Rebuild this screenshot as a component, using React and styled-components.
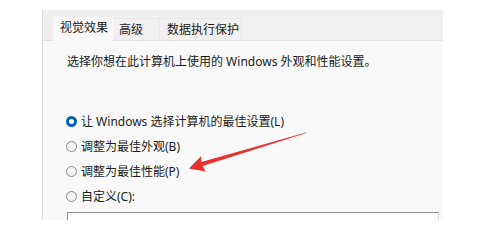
import React from "react";
import styled, { createGlobalStyle } from "styled-components";

const GlobalStyle = createGlobalStyle`
  html, body {
    margin: 0;
    padding: 0;
    background: #ffffff;
  }
  body {
    font-family: "Noto Sans", "Noto Sans CJK SC", sans-serif;
    font-size: 12px;
    color: #1b1b1b;
  }
`;

const Page = styled.div`
  position: relative;
  width: 482px;
  height: 220px;
  overflow: hidden;
  padding: 10px 0 0 42px;
  box-sizing: border-box;
`;

const Dialog = styled.div`
  width: 401px;
  height: 240px;
  background: #f9f9f9;
  border-left: 1px solid #dcdcdc;
  box-sizing: border-box;
`;

const TabStrip = styled.div`
  display: flex;
  align-items: flex-end;
  height: 31px;
  padding-left: 10px;
  background: #f0f0f0;
  border-bottom: 1px solid #e3e3e3;
  box-sizing: border-box;
`;

const Tab = styled.div`
  display: flex;
  align-items: center;
  box-sizing: border-box;
  width: ${(p) => p.$width}px;
  height: ${(p) => (p.$active ? 24 : 22)}px;
  padding-left: ${(p) => p.$pad}px;
  margin-bottom: ${(p) => (p.$active ? -1 : 0)}px;
  background: ${(p) => (p.$active ? "#f9f9f9" : "#f0f0f0")};
  border: 1px solid ${(p) => (p.$active ? "#f9f9f9" : "#e6e6e6")};
  border-bottom: none;
  border-left: ${(p) => (p.$active ? "1px solid #f9f9f9" : "none")};
  font-size: 12px;
  line-height: 16px;
  white-space: nowrap;
  padding-bottom: ${(p) => (p.$active ? 3 : 0)}px;
`;

const Content = styled.div`
  padding: 13px 4px 0 24px;
`;

const Description = styled.p`
  margin: 0;
  font-size: 12px;
  line-height: 16px;
  white-space: nowrap;
`;

const RadioGroup = styled.div`
  display: flex;
  flex-direction: column;
  margin-top: 39px;
`;

const RadioRow = styled.label`
  display: flex;
  align-items: center;
  gap: 4px;
  height: 25px;
  font-size: 12px;
  line-height: 16px;
  white-space: nowrap;
`;

const RadioDot = styled.span`
  width: 11px;
  height: 11px;
  border-radius: 50%;
  box-sizing: border-box;
  flex-shrink: 0;
  margin-left: -1px;
  background: ${(p) => (p.$checked ? "#ffffff" : "#f5f5f5")};
  border: ${(p) => (p.$checked ? "3px solid #0063b8" : "1px solid #8c8c8c")};
`;

const ListBox = styled.div`
  margin-top: 3px;
  height: 40px;
  background: #ffffff;
  border: 1px solid #8a8a8a;
  border-right-color: #d8d8d8;
`;

const ArrowLayer = styled.svg`
  position: absolute;
  left: 0;
  top: 0;
  width: 482px;
  height: 220px;
  pointer-events: none;
`;

const tabs = [
  { label: "视觉效果", width: 60, pad: 6, active: true },
  { label: "高级", width: 47, pad: 6 },
  { label: "数据执行保护", width: 82, pad: 7 },
];

const options = [
  { label: "让 Windows 选择计算机的最佳设置(L)", checked: true },
  { label: "调整为最佳外观(B)" },
  { label: "调整为最佳性能(P)" },
  { label: "自定义(C):" },
];

export default function App() {
  return (
    <>
      <GlobalStyle />
      <Page>
        <Dialog>
          <TabStrip>
            {tabs.map((t) => (
              <Tab key={t.label} $active={t.active} $width={t.width} $pad={t.pad}>
                {t.label}
              </Tab>
            ))}
          </TabStrip>
          <Content>
            <Description>选择你想在此计算机上使用的 Windows 外观和性能设置。</Description>
            <RadioGroup>
              {options.map((o) => (
                <RadioRow key={o.label}>
                  <RadioDot $checked={o.checked} />
                  <span>{o.label}</span>
                </RadioRow>
              ))}
            </RadioGroup>
            <ListBox />
          </Content>
        </Dialog>
        <ArrowLayer viewBox="0 0 482 220">
          <polygon
            fill="#e8302c"
            points="189,168.5 201,156.3 201.4,162 306,132.4 306.3,133 202.6,166 205.6,171.6"
          />
        </ArrowLayer>
      </Page>
    </>
  );
}
